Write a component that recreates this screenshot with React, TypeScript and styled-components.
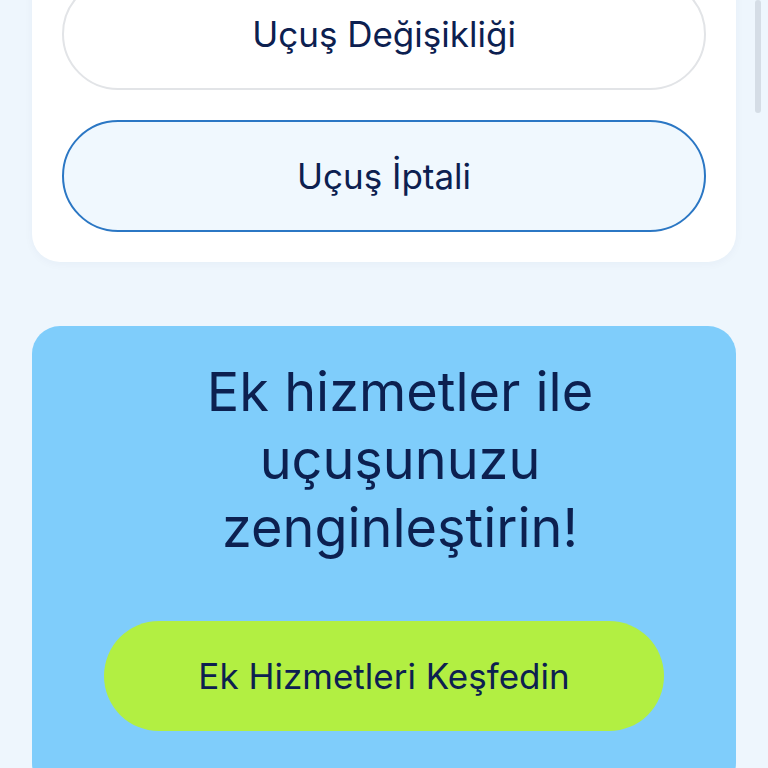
import styled, { createGlobalStyle } from "styled-components";

const GlobalStyle = createGlobalStyle`
  html, body {
    margin: 0;
    padding: 0;
    background: #eef6fd;
    overflow: hidden;
  }
  body {
    font-family: Inter, Roboto, "Liberation Sans", sans-serif;
    color: #0c2050;
  }
  * {
    box-sizing: border-box;
  }
`;

const Page = styled.main`
  position: relative;
  width: 768px;
  height: 768px;
  overflow: hidden;
`;

const Content = styled.div`
  display: flex;
  flex-direction: column;
  gap: 64px;
  padding: 0 32px;
  margin-top: -52px;
`;

const ActionCard = styled.section`
  background: #ffffff;
  border-radius: 28px;
  padding: 30px;
  display: flex;
  flex-direction: column;
  gap: 30px;
  box-shadow: 0 2px 10px rgba(20, 60, 110, 0.04);
`;

const PillButton = styled.button<{ $active?: boolean }>`
  height: 112px;
  width: 100%;
  border-radius: 56px;
  border: 2px solid ${({ $active }) => ($active ? "#2b77c4" : "#e2e4e7")};
  background: ${({ $active }) => ($active ? "#f0f8fe" : "#ffffff")};
  font-family: inherit;
  font-size: 35px;
  color: #0c2050;
  display: flex;
  align-items: center;
  justify-content: center;
  cursor: pointer;
`;

const PromoCard = styled.section`
  background: #7fcdfb;
  border-radius: 28px;
  padding: 32px 60px 60px;
  display: flex;
  flex-direction: column;
  align-items: center;
  gap: 59px;
`;

const PromoTitle = styled.h2`
  margin: 0 0 0 32px;
  font-size: 54px;
  line-height: 68px;
  font-weight: 400;
  text-align: center;
  color: #0c2050;
  max-width: 500px;
`;

const ExploreButton = styled.button`
  width: 560px;
  height: 110px;
  border-radius: 55px;
  border: none;
  background: #b2ef42;
  font-family: inherit;
  font-size: 35px;
  color: #0c2050;
  cursor: pointer;
`;

const ScrollThumb = styled.div`
  position: absolute;
  top: 0;
  right: 7px;
  width: 6px;
  height: 113px;
  border-radius: 3px;
  background: #d5dde6;
`;

export default function App() {
  return (
    <Page>
      <GlobalStyle />
      <Content>
        <ActionCard>
          <PillButton>Uçuş Değişikliği</PillButton>
          <PillButton $active>Uçuş İptali</PillButton>
        </ActionCard>
        <PromoCard>
          <PromoTitle>Ek hizmetler ile uçuşunuzu zenginleştirin!</PromoTitle>
          <ExploreButton>Ek Hizmetleri Keşfedin</ExploreButton>
        </PromoCard>
      </Content>
      <ScrollThumb />
    </Page>
  );
}
